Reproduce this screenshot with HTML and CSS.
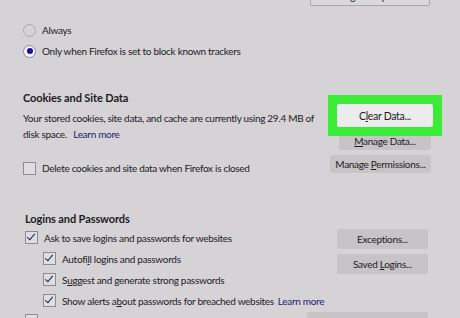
FILE: index.html
```html
<!DOCTYPE html>
<html lang="en">
<head>
  <meta charset="UTF-8" />
  <title>Options - Privacy &amp; Security</title>
  <link rel="stylesheet" href="styles.css">
</head>
<body>
  <div class="top-row">
    <button class="btn btn-light">Manage Exceptions...</button>
  </div>

  <div class="radios">
    <label class="option"><span class="radio"></span>Always</label>
    <label class="option"><span class="radio checked"></span>Only when Firefox is set to block known trackers</label>
  </div>

  <section class="group cookies">
    <h3>Cookies and Site Data</h3>
    <p class="desc">Your stored cookies, site data, and cache are currently using 29.4 MB of disk space. <a href="#">Learn more</a></p>
    <label class="option"><span class="check"></span>Delete cookies and site data when Firefox is closed</label>
    <div class="actions">
      <div class="highlight">
        <button class="btn btn-white">C<u>l</u>ear Data...</button>
      </div>
      <button class="btn btn-data"><u>M</u>anage Data...</button>
      <button class="btn btn-perm">Manage <u>P</u>ermissions...</button>
    </div>
  </section>

  <section class="group logins">
    <h3>Logins and Passwords</h3>
    <label class="option"><span class="check on"></span>Ask to save logins and passwords for websites</label>
    <label class="option sub"><span class="check on"></span>Autofi<u>l</u>l logins and passwords</label>
    <label class="option sub"><span class="check on"></span>S<u>u</u>ggest and generate strong passwords</label>
    <label class="option sub"><span class="check on"></span>Show alerts a<u>b</u>out passwords for breached websites <a href="#">Learn more</a></label>
    <div class="actions">
      <button class="btn">Exceptions...</button>
      <button class="btn">Saved <u>L</u>ogins...</button>
    </div>
  </section>

  <div class="master-row">
    <label class="option"><span class="check"></span>Use a master password</label>
    <button class="btn btn-master">Change Master Password...</button>
  </div>
</body>
</html>
```
FILE: styles.css
```css
body {
  margin: 0;
  height: 318px;
  overflow: hidden;
  background-color: #d5d3d6;
  font-family: "Lato", sans-serif;
  font-size: 10px;
  letter-spacing: -0.3px;
  color: #1c1b1f;
}
u {
  text-decoration-thickness: 1px;
  text-underline-offset: 1px;
}
a {
  color: #23216f;
  text-decoration: none;
  margin-left: 4px;
}

.btn {
  font-family: inherit;
  font-size: 10px;
  letter-spacing: -0.3px;
  color: #1c1b1f;
  background-color: #c6c4c7;
  border: none;
  border-radius: 2px;
  height: 20px;
  padding: 0;
  cursor: pointer;
}

.top-row {
  display: flex;
  justify-content: flex-end;
  padding-right: 30px;
  margin-top: -14px;
}
.btn-light {
  width: 120px;
  background-color: #d9d8da;
  border: 1px solid #a9a8ab;
}

.radios {
  display: flex;
  flex-direction: column;
  gap: 5px;
  margin: 16px 0 0 23px;
}
.option {
  display: flex;
  align-items: center;
  height: 16px;
  white-space: nowrap;
}
.radio {
  width: 11px;
  height: 11px;
  border: 1px solid #aba9ae;
  border-radius: 50%;
  margin-right: 6px;
  display: flex;
  align-items: center;
  justify-content: center;
  box-sizing: content-box;
}
.radio.checked {
  background-color: #f4f3f5;
  border-color: #8d8aa3;
}
.radio.checked::after {
  content: "";
  width: 6px;
  height: 6px;
  border-radius: 50%;
  background-color: #1612a0;
}
.check {
  width: 11px;
  height: 11px;
  border: 1px solid #8e8c92;
  background-color: #dedde0;
  margin-right: 6px;
  flex-shrink: 0;
  position: relative;
}
.check.on::after {
  content: "";
  position: absolute;
  left: 3px;
  top: 0;
  width: 3px;
  height: 7px;
  border: solid #1d1c3c;
  border-width: 0 1.5px 1.5px 0;
  transform: rotate(40deg);
}

.group {
  display: grid;
  grid-template-columns: 1fr auto;
  column-gap: 10px;
}
.group h3 {
  grid-column: 1;
  margin: 0;
  font-size: 11px;
  font-weight: 700;
  letter-spacing: -0.1px;
  line-height: 16px;
}
.group .option,
.group .desc {
  grid-column: 1;
}
.actions {
  grid-column: 2;
  grid-row: 1 / span 6;
  display: flex;
  flex-direction: column;
  align-items: flex-end;
  gap: 5px;
}

.cookies {
  margin: 31px 0 0 23px;
  padding-right: 29px;
}
.cookies .desc {
  margin: 4px 0 0;
  line-height: 16px;
  width: 295px;
}
.cookies .option {
  margin-top: 18px;
}
.cookies .actions {
  margin-top: 5px;
}
.highlight {
  background-color: #3ceb37;
  padding: 9px;
  margin: 0 -11px -9px 0;
  position: relative;
  z-index: 1;
}
.btn-white {
  display: block;
  width: 96px;
  height: 23px;
  font-size: 10.5px;
  background-color: #ecebed;
}
.btn-data {
  width: 92px;
  height: 18px;
}
.btn-perm {
  width: 101px;
  height: 18px;
}

.logins {
  margin: 35px 0 0 25px;
  padding-right: 32px;
}
.logins .option {
  height: 21px;
}
.logins .option.sub {
  padding-left: 18px;
}
.logins .actions {
  grid-row: 2 / span 5;
  margin-top: 2px;
}
.logins .btn {
  width: 91px;
}

.master-row {
  display: flex;
  justify-content: space-between;
  align-items: flex-start;
  margin: 1px 32px 0 25px;
}
.master-row .option {
  height: auto;
  margin-top: 2px;
}
.btn-master {
  width: 121px;
}
```
